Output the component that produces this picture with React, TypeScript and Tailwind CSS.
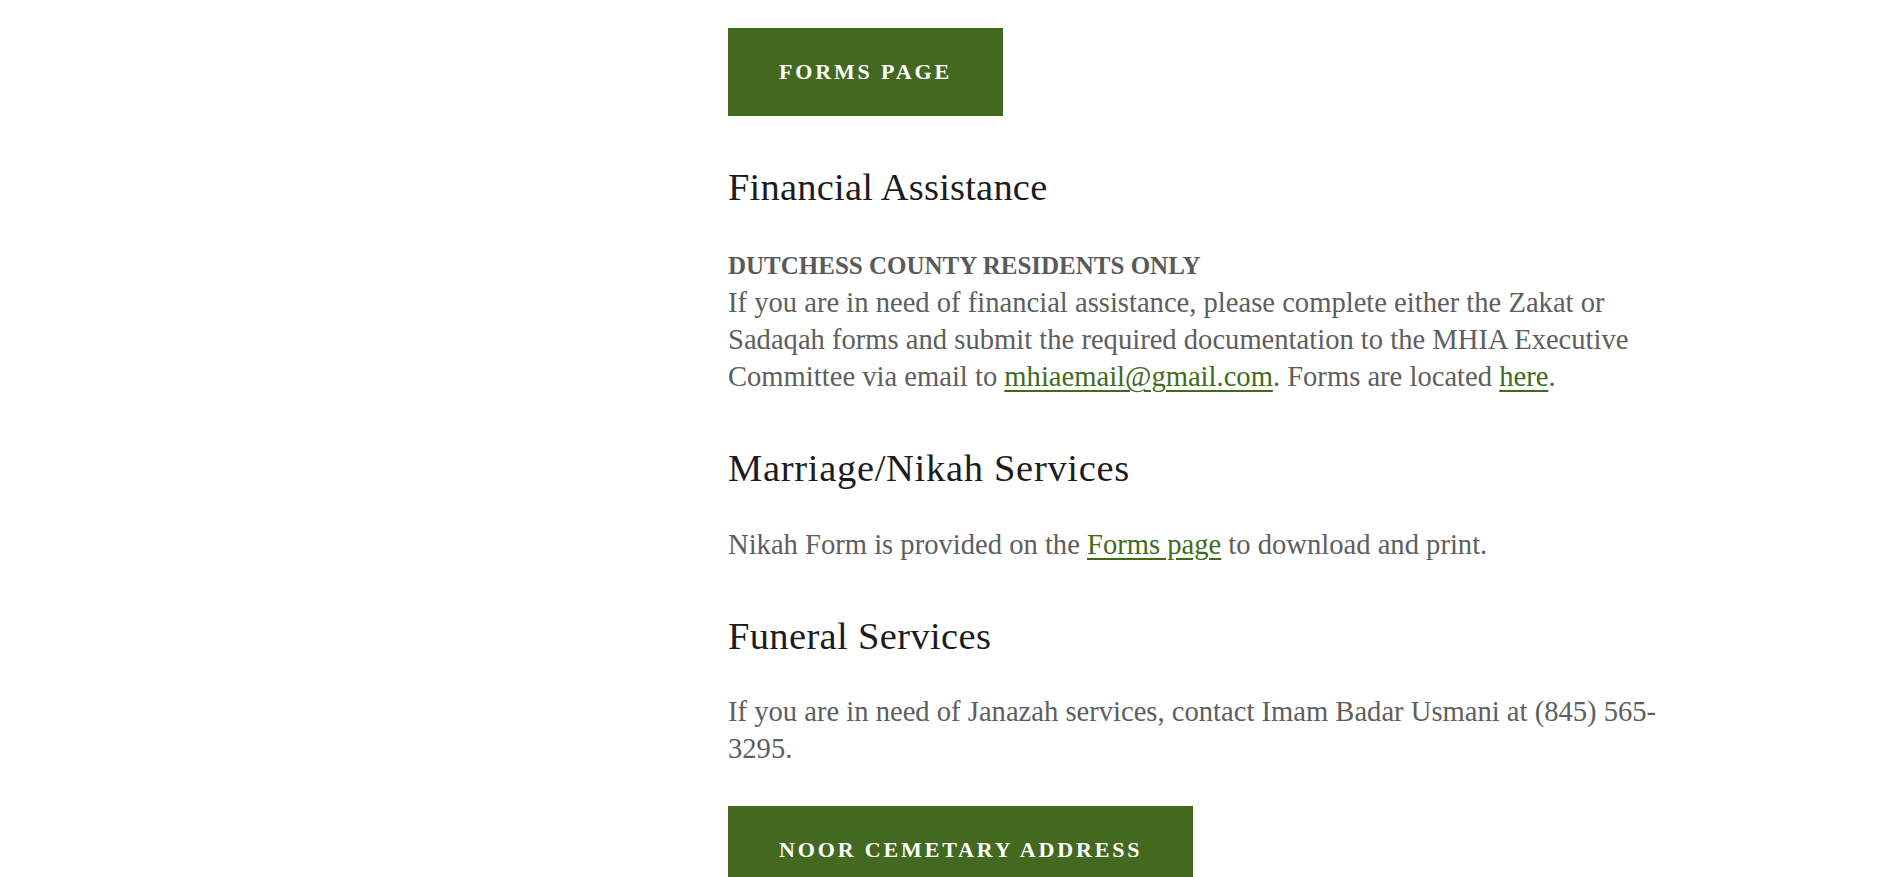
import React from "react";

const linkCls =
  "text-[#3f6b1c] underline decoration-[#3f6b1c] decoration-[1.5px] underline-offset-[4px]";

function GreenButton({ children }: { children: React.ReactNode }) {
  return (
    <a
      href="#"
      className="inline-block bg-[#436820] px-[51px] py-[30px] text-[22px] leading-[28px] font-bold uppercase tracking-[2.85px] text-white"
    >
      {children}
    </a>
  );
}

export default function App() {
  return (
    <div className="min-h-[877px] w-full bg-white font-['Liberation_Serif',serif] overflow-hidden">
      <div className="flex">
        <div className="w-[728px] shrink-0" />
        <main className="w-[940px] pt-[28px]">
          <GreenButton>Forms Page</GreenButton>

          <h2 className="mt-[48px] text-[38.5px] leading-[46px] tracking-[0.2px] font-normal text-[#1c1c1c]">
            Financial Assistance
          </h2>
          <div className="mt-[37px] text-[28.6px] leading-[37px] text-[#5e5e5e]">
            <div className="text-[25px] font-bold text-[#5a5a5a]">DUTCHESS COUNTY RESIDENTS ONLY</div>
            <p>
              If you are in need of financial assistance, please complete either the Zakat or
              Sadaqah forms and submit the required documentation to the MHIA Executive
              Committee via email to{" "}
              <a href="#" className={linkCls}>
                mhiaemail@gmail.com
              </a>
              . Forms are located{" "}
              <a href="#" className={linkCls}>
                here
              </a>
              .
            </p>
          </div>

          <h2 className="mt-[50px] text-[38.5px] leading-[46px] tracking-[0.7px] font-normal text-[#1c1c1c]">
            Marriage/Nikah Services
          </h2>
          <p className="mt-[35px] text-[28.6px] leading-[37px] text-[#5e5e5e]">
            Nikah Form is provided on the{" "}
            <a href="#" className={linkCls}>
              Forms page
            </a>{" "}
            to download and print.
          </p>

          <h2 className="mt-[50px] text-[38.5px] leading-[46px] tracking-[0.35px] font-normal text-[#1c1c1c]">
            Funeral Services
          </h2>
          <p className="mt-[34px] text-[28.6px] leading-[37px] text-[#5e5e5e]">
            If you are in need of Janazah services, contact Imam Badar Usmani at (845) 565-3295.
          </p>

          <div className="mt-[39px]">
            <GreenButton>Noor Cemetary Address</GreenButton>
          </div>
        </main>
      </div>
    </div>
  );
}
